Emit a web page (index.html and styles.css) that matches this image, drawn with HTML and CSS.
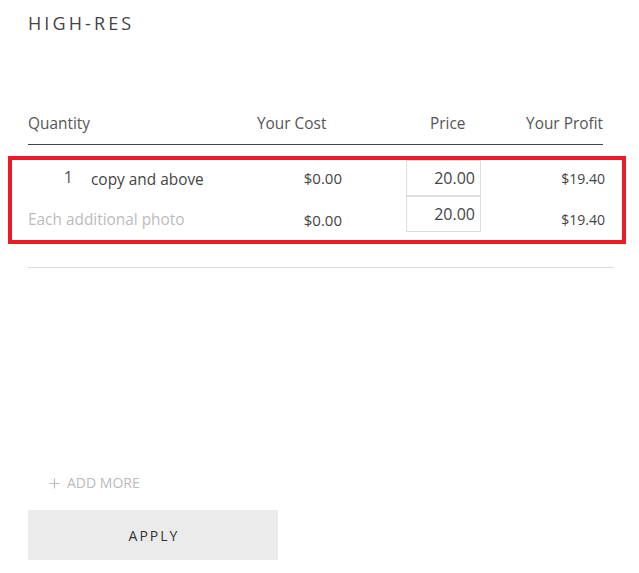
FILE: index.html
```html
<!DOCTYPE html>
<html>
<head>
<meta charset="utf-8">
<link rel="stylesheet" href="styles.css">
</head>
<body>
<div class="page">
  <h2 class="title">HIGH-RES</h2>
  <div class="thead">
    <div class="th th-qty">Quantity</div>
    <div class="th th-cost">Your Cost</div>
    <div class="th th-price">Price</div>
    <div class="th th-profit">Your Profit</div>
  </div>
  <div class="rows">
    <div class="row">
      <div class="cell-name"><span class="qty">1</span><span class="qty-label">copy and above</span></div>
      <div class="cell-cost">$0.00</div>
      <div class="cell-price"><input class="price-input" type="text" value="20.00"></div>
      <div class="cell-profit">$19.40</div>
    </div>
    <div class="row row-extra">
      <div class="cell-name muted">Each additional photo</div>
      <div class="cell-cost">$0.00</div>
      <div class="cell-price"><input class="price-input" type="text" value="20.00"></div>
      <div class="cell-profit">$19.40</div>
    </div>
  </div>
  <div class="divider"></div>
  <div class="add-more">
    <svg class="plus" width="11" height="11" viewBox="0 0 11 11"><path d="M5.5 0.5V10.5M0.5 5.5H10.5" stroke="#bbbbbb" stroke-width="1.2" fill="none"/></svg>
    <span>ADD MORE</span>
  </div>
  <button class="apply">APPLY</button>
</div>
</body>
</html>
```
FILE: styles.css
```css
html, body {
  margin: 0;
  padding: 0;
  background: #ffffff;
}
body {
  font-family: "Open Sans", "Liberation Sans", sans-serif;
  color: #444444;
}
.page {
  padding: 11px 0 0 28px;
}
.title {
  margin: 0;
  font-size: 18px;
  line-height: 24px;
  font-weight: 400;
  letter-spacing: 3.1px;
  color: #444444;
}
.thead {
  margin-top: 79px;
  width: 575px;
  display: flex;
  font-size: 15.4px;
  line-height: 20px;
  color: #555555;
  padding-bottom: 10px;
  border-bottom: 1px solid #444444;
}
.th-qty { width: 229px; }
.th-cost { width: 173px; }
.th-price { width: 96px; }
.th-profit { flex: 1; text-align: right; }

.rows {
  margin: 11px 0 0 -20px;
  width: 618px;
  border: 4px solid #ed1c24;
  padding: 0 17px 8px 16px;
  box-sizing: border-box;
}
.row {
  display: flex;
  align-items: center;
  height: 36px;
  font-size: 15.4px;
}
.cell-name {
  width: 232px;
  display: flex;
  align-items: center;
}
.qty {
  width: 45px;
  text-align: right;
  font-size: 16px;
  padding-bottom: 2px;
  color: #555555;
}
.qty-label {
  margin-left: 18px;
  padding-top: 2px;
  color: #444444;
}
.muted {
  color: #bbbbbb;
}
.cell-cost {
  width: 82px;
  text-align: right;
  font-size: 15px;
  color: #444444;
}
.cell-price {
  margin-left: 64px;
  width: 75px;
  height: 36px;
}
.price-input {
  width: 75px;
  height: 36px;
  box-sizing: border-box;
  border: 1px solid #dddddd;
  padding: 0 5px 0 0;
  margin: 0;
  text-align: right;
  font-family: "Open Sans", "Liberation Sans", sans-serif;
  font-size: 16px;
  color: #444444;
  background: #ffffff;
  outline: none;
}
.cell-profit {
  width: 124px;
  text-align: right;
  font-size: 14px;
  color: #444444;
}
.row-extra .cell-name,
.row-extra .cell-cost,
.row-extra .cell-profit {
  padding-top: 11px;
}
.divider {
  margin-top: 23px;
  width: 586px;
  height: 1px;
  background: #dddddd;
}
.add-more {
  margin-top: 205px;
  padding-left: 21px;
  display: flex;
  align-items: center;
  height: 20px;
  font-size: 14px;
  line-height: 20px;
  color: #bbbbbb;
}
.plus {
  margin-right: 7px;
}
.apply {
  display: block;
  margin-top: 17px;
  width: 250px;
  height: 50px;
  border: none;
  background: #ebebeb;
  font-family: "Open Sans", "Liberation Sans", sans-serif;
  font-size: 14px;
  letter-spacing: 2px;
  color: #333333;
  padding: 0 0 0 2px;
  cursor: pointer;
}
```
